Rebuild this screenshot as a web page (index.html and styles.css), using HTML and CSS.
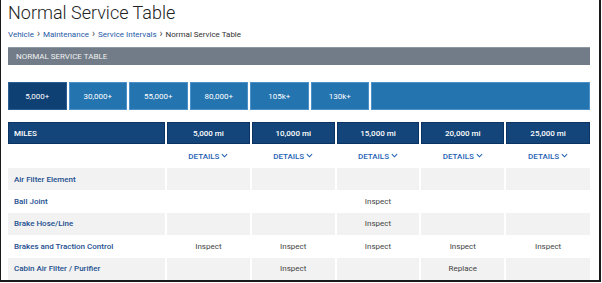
FILE: index.html
```html
<!DOCTYPE html>
<html lang="en">
<head>
    <meta charset="UTF-8">
    <title>Normal Service Table</title>
    <link rel="stylesheet" href="styles.css">
</head>
<body>
    <div class="frame">
        <h1>Normal Service Table</h1>

        <div class="crumbs">
            <a href="#">Vehicle</a><span class="sep">&rsaquo;</span>
            <a href="#">Maintenance</a><span class="sep">&rsaquo;</span>
            <a href="#">Service Intervals</a><span class="sep">&rsaquo;</span>
            <span class="current">Normal Service Table</span>
        </div>

        <div class="bar">NORMAL SERVICE TABLE</div>

        <div class="tabs">
            <div class="tab active">5,000+</div>
            <div class="tab">30,000+</div>
            <div class="tab">55,000+</div>
            <div class="tab">80,000+</div>
            <div class="tab">105k+</div>
            <div class="tab">130k+</div>
            <div class="tab filler"></div>
        </div>

        <table class="service">
            <colgroup>
                <col class="col-label">
                <col><col><col><col><col>
            </colgroup>
            <thead>
                <tr class="head">
                    <th class="label">MILES</th>
                    <th>5,000 mi</th>
                    <th>10,000 mi</th>
                    <th>15,000 mi</th>
                    <th>20,000 mi</th>
                    <th>25,000 mi</th>
                </tr>
                <tr class="details">
                    <td></td>
                    <td><a href="#">DETAILS <svg viewBox="0 0 8 5" width="7" height="5"><polyline points="1,1 4,4 7,1" /></svg></a></td>
                    <td><a href="#">DETAILS <svg viewBox="0 0 8 5" width="7" height="5"><polyline points="1,1 4,4 7,1" /></svg></a></td>
                    <td><a href="#">DETAILS <svg viewBox="0 0 8 5" width="7" height="5"><polyline points="1,1 4,4 7,1" /></svg></a></td>
                    <td><a href="#">DETAILS <svg viewBox="0 0 8 5" width="7" height="5"><polyline points="1,1 4,4 7,1" /></svg></a></td>
                    <td><a href="#">DETAILS <svg viewBox="0 0 8 5" width="7" height="5"><polyline points="1,1 4,4 7,1" /></svg></a></td>
                </tr>
            </thead>
            <tbody>
                <tr>
                    <td class="label">Air Filter Element</td>
                    <td></td><td></td><td></td><td></td><td></td>
                </tr>
                <tr>
                    <td class="label">Ball Joint</td>
                    <td></td><td></td><td>Inspect</td><td></td><td></td>
                </tr>
                <tr>
                    <td class="label">Brake Hose/Line</td>
                    <td></td><td></td><td>Inspect</td><td></td><td></td>
                </tr>
                <tr>
                    <td class="label">Brakes and Traction Control</td>
                    <td>Inspect</td><td>Inspect</td><td>Inspect</td><td>Inspect</td><td>Inspect</td>
                </tr>
                <tr>
                    <td class="label">Cabin Air Filter / Purifier</td>
                    <td></td><td>Inspect</td><td></td><td>Replace</td><td></td>
                </tr>
            </tbody>
        </table>
    </div>
</body>
</html>
```

FILE: styles.css
```css
body {
    margin: 0;
    font-family: Roboto, "Liberation Sans", Arial, sans-serif;
    background: #fff;
}
.frame {
    width: 601px;
    height: 282px;
    box-sizing: border-box;
    border-left: 1px solid #1a1a1a;
    border-right: 2px solid #1a1a1a;
    border-bottom: 2px solid #1a1a1a;
    padding: 0 9px 0 7px;
    overflow: hidden;
}
h1 {
    margin: 0;
    font-size: 18px;
    line-height: 26px;
    font-weight: 300;
    color: #222;
}
.crumbs {
    margin-top: 2px;
    font-size: 8px;
    line-height: 12px;
    color: #333;
}
.crumbs a {
    color: #1f5aa6;
    text-decoration: none;
}
.crumbs .sep {
    color: #444;
    margin: 0 1px 0 3px;
    font-size: 10px;
}
.bar {
    margin-top: 6px;
    height: 18px;
    line-height: 18px;
    box-sizing: border-box;
    padding-left: 8px;
    background: #717c88;
    border-top: 1px solid #8e98a3;
    color: #f0f0f0;
    font-size: 8px;
}
.tabs {
    margin-top: 17px;
    display: flex;
    gap: 2px;
    height: 28px;
}
.tab {
    width: 58.5px;
    box-sizing: border-box;
    background: #2474b0;
    border: 1px solid #4c90c9;
    color: #fff;
    font-size: 8px;
    display: flex;
    align-items: center;
    justify-content: center;
}
.tab.active {
    background: #0f4074;
    border-color: #2a5d92;
}
.tab.filler {
    flex: 1;
}
.service {
    margin-top: 12px;
    width: 582px;
    border-collapse: collapse;
    table-layout: fixed;
    font-size: 8px;
}
.col-label {
    width: 158px;
}
.service th,
.service td {
    padding: 0;
    text-align: center;
    border-left: 2px solid #fff;
}
.service th:first-child,
.service td:first-child {
    border-left: none;
}
.service .label {
    text-align: left;
    padding-left: 6px;
}
.head th {
    height: 22px;
    background: #13457a;
    color: #fff;
    font-weight: 500;
    box-shadow: inset 0 0 0 1px #0b3362;
}
.details td {
    height: 24px;
}
.details a {
    color: #1f5fb5;
    font-weight: 500;
    text-decoration: none;
}
.details svg {
    fill: none;
    stroke: #1f5fb5;
    stroke-width: 1.2;
    vertical-align: 1px;
}
tbody td {
    height: 22.4px;
    color: #444;
}
tbody tr:nth-child(odd) td {
    background: #f2f2f2;
}
tbody td.label {
    color: #1c4f8f;
    font-weight: 500;
}
```
